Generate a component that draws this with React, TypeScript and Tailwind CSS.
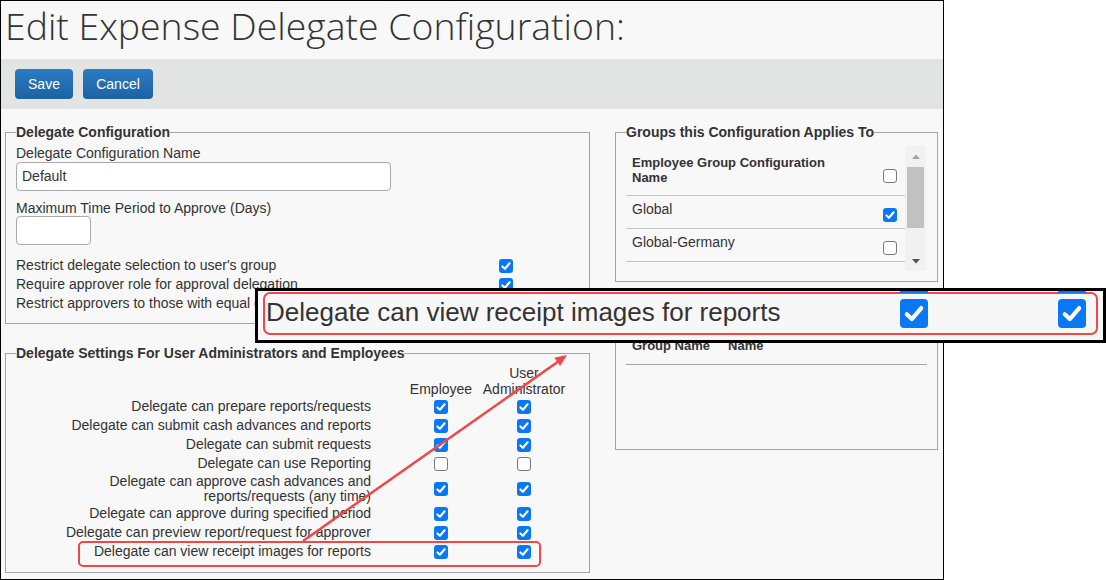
import React from "react";
import clsx from "clsx";

const Box = ({ checked = false, big = false }: { checked?: boolean; big?: boolean }) => (
  <span
    className={clsx(
      "inline-flex shrink-0 items-center justify-center",
      big ? "h-[29px] w-[28px] rounded-[4px]" : "h-[14px] w-[14px] rounded-[3px]",
      checked ? "bg-[#0a78f5]" : "border border-[#7a7a7a] bg-white"
    )}
  >
    {checked && (
      <svg viewBox="0 0 14 14" className="h-full w-full">
        <path
          d="M3.4 7.4L5.9 9.8L10.6 4.3"
          fill="none"
          stroke="white"
          strokeWidth={2.1}
          strokeLinecap="round"
          strokeLinejoin="round"
        />
      </svg>
    )}
  </span>
);

const settings = [
  { label: ["Delegate can prepare reports/requests"], emp: true, adm: true },
  { label: ["Delegate can submit cash advances and reports"], emp: true, adm: true },
  { label: ["Delegate can submit requests"], emp: true, adm: true },
  { label: ["Delegate can use Reporting"], emp: false, adm: false },
  {
    label: ["Delegate can approve cash advances and", "reports/requests (any time)"],
    emp: true,
    adm: true,
  },
  { label: ["Delegate can approve during specified period"], emp: true, adm: true },
  { label: ["Delegate can preview report/request for approver"], emp: true, adm: true },
  { label: ["Delegate can view receipt images for reports"], emp: true, adm: true },
];

const restrictions = [
  { label: "Restrict delegate selection to user's group", checked: true },
  { label: "Require approver role for approval delegation", checked: true },
  { label: "Restrict approvers to those with equal cost center", checked: false },
];

const groups = [
  { name: "Global", checked: true },
  { name: "Global-Germany", checked: false },
];

export default function App() {
  return (
    <div className="relative h-[580px] w-[1106px] bg-white font-['Liberation_Sans',Arial,sans-serif] text-[#333]">
      {/* Screenshot frame */}
      <div className="h-[580px] w-[944px] border border-black bg-[#f8f8f8]">
        <div className="h-[58px] pl-[4px] pt-[1px]">
          <h1 className="font-['Open_Sans',sans-serif] text-[37.4px] font-light leading-[48px] text-[#333]">
            Edit Expense Delegate Configuration:
          </h1>
        </div>

        {/* Toolbar */}
        <div className="flex h-[50px] items-center gap-[10px] bg-[#e2e3e3] pl-[14px]">
          <button className="h-[30px] w-[58px] rounded-[4px] bg-gradient-to-b from-[#2a7bc2] to-[#1d62a2] text-[14px] text-white">
            Save
          </button>
          <button className="h-[30px] w-[70px] rounded-[4px] bg-gradient-to-b from-[#2a7bc2] to-[#1d62a2] text-[14px] text-white">
            Cancel
          </button>
        </div>

        <div className="flex gap-[25px] pl-[4px]">
          {/* Left column */}
          <div className="w-[585px] pt-[15px]">
            <fieldset className="border border-[#a4a4a4] px-[10px] pb-[11px]">
              <legend className="text-[14px] font-bold leading-[16px]">Delegate Configuration</legend>
              <div className="mt-[5px] text-[14px] leading-[16px]">Delegate Configuration Name</div>
              <div className="mt-[1px] flex h-[29px] w-[375px] items-center rounded-[4px] border border-[#aaa] bg-white pl-[5px] text-[14px]">
                Default
              </div>
              <div className="mt-[9px] text-[14px] leading-[16px]">Maximum Time Period to Approve (Days)</div>
              <div className="h-[29px] w-[75px] rounded-[4px] border border-[#aaa] bg-white" />
              <div className="mt-[10px]">
                {restrictions.map((r) => (
                  <div key={r.label} className="grid h-[19px] grid-cols-[483px_14px] items-center text-[14px]">
                    <span className="whitespace-nowrap">{r.label}</span>
                    <Box checked={r.checked} />
                  </div>
                ))}
              </div>
            </fieldset>

            <fieldset className="mt-[21px] border border-[#a4a4a4] px-[10px] pb-[11px]">
              <legend className="text-[14px] font-bold leading-[16px]">
                Delegate Settings For User Administrators and Employees
              </legend>
              <div className="mt-[4px] grid grid-cols-[388px_74px_92px] text-[14px] leading-[16px]">
                <span />
                <span className="self-end text-center">Employee</span>
                <span className="text-center">
                  User
                  <br />
                  Administrator
                </span>
              </div>
              {settings.map((s) => (
                <div
                  key={s.label[0]}
                  className={clsx(
                    "grid grid-cols-[388px_74px_92px] items-center text-[14px] leading-[15px]",
                    s.label.length > 1 ? "h-[31px]" : "h-[19px]"
                  )}
                >
                  <span className="pr-[33px] text-right">
                    {s.label.map((l) => (
                      <div key={l}>{l}</div>
                    ))}
                  </span>
                  <span className="flex justify-center">
                    <Box checked={s.emp} />
                  </span>
                  <span className="flex justify-center">
                    <Box checked={s.adm} />
                  </span>
                </div>
              ))}
            </fieldset>
          </div>

          {/* Right column */}
          <div className="w-[323px] pt-[15px]">
            <fieldset className="border border-[#a4a4a4] px-[10px] pb-[10px]">
              <legend className="text-[14px] font-bold leading-[16px]">Groups this Configuration Applies To</legend>
              <div className="mt-[6px] flex h-[125px]">
                <div className="w-[279px]">
                  <div className="flex h-[50px] justify-between border-b border-[#c4c4c4] pr-[8px]">
                    <div className="w-[220px] pl-[6px] pt-[9px] text-[13px] font-bold leading-[15px]">
                      Employee Group Configuration Name
                    </div>
                    <div className="pt-[20px]">
                      <Box />
                    </div>
                  </div>
                  {groups.map((g) => (
                    <div key={g.name} className="flex h-[33px] justify-between border-b border-[#c4c4c4] pr-[8px]">
                      <div className="pl-[6px] pt-[5px] text-[14px] leading-[16px]">{g.name}</div>
                      <div className="pt-[9px]">
                        <Box checked={g.checked} />
                      </div>
                    </div>
                  ))}
                </div>
                {/* Scrollbar */}
                <div className="flex w-[21px] flex-col items-center bg-[#f1f1f1]">
                  <svg width="10" height="21" viewBox="0 0 10 21">
                    <path d="M1 13L5 8.5L9 13Z" fill="#a3a3a3" />
                  </svg>
                  <div className="h-[61px] w-[17px] bg-[#c1c1c1]" />
                  <div className="flex-1" />
                  <svg width="10" height="21" viewBox="0 0 10 21">
                    <path d="M1 9L5 13.5L9 9Z" fill="#505050" />
                  </svg>
                </div>
              </div>
            </fieldset>

            <fieldset className="mt-[10px] h-[158px] border border-[#a4a4a4] px-[10px]">
              <div className="mt-[45px] flex gap-[18px] border-b border-[#a4a4a4] pb-[10px] pl-[6px] text-[13px] font-bold leading-[16px]">
                <span>Group Name</span>
                <span>Name</span>
              </div>
            </fieldset>
          </div>
        </div>
      </div>

      {/* Highlight on last settings row */}
      <div className="pointer-events-none absolute left-[78px] top-[541px] h-[26px] w-[463px] rounded-[5px] border-2 border-[#f04848]" />

      {/* Arrow */}
      <svg className="pointer-events-none absolute left-0 top-0" width="1106" height="580">
        <line x1="303" y1="541" x2="559" y2="361" stroke="#f04848" strokeWidth="2.5" />
        <polygon points="567,355 560.1,366 554.3,357.8" fill="#f04848" />
      </svg>

      {/* Zoomed callout, lies over the page */}
      <div className="absolute left-[255px] top-[288px] h-[55px] w-[851px] border-[3px] border-black bg-[#f7f7f7]">
        <span className="absolute left-[642px] top-0 h-[2px] w-[28px] bg-[#0a78f5]" />
        <span className="absolute left-[800px] top-0 h-[2px] w-[28px] bg-[#0a78f5]" />
        <div className="ml-[5px] mt-[1px] flex h-[43px] w-[835px] items-center rounded-[7px] border-[2.5px] border-[#f04848] pl-[1px]">
          <span className="w-[634px] pb-[3px] text-[26px] leading-[30px] text-[#333]">
            Delegate can view receipt images for reports
          </span>
          <Box checked big />
          <span className="w-[130px]" />
          <Box checked big />
        </div>
      </div>
    </div>
  );
}
